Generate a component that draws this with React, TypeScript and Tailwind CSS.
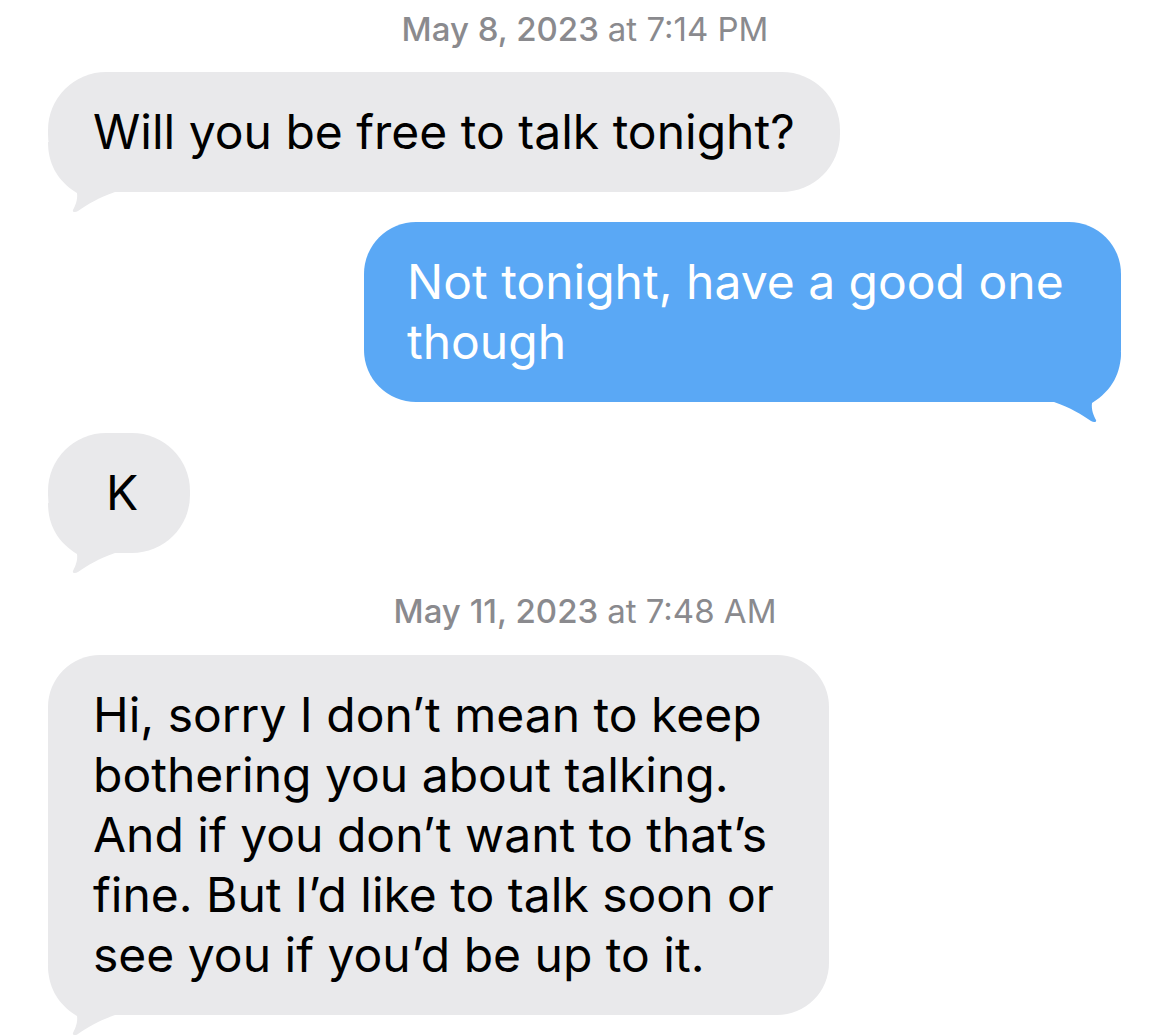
const GRAY = "#e9e9eb";
const BLUE = "#5aa8f5";

function Tail({ side, color }: { side: "left" | "right"; color: string }) {
  return (
    <svg
      width="80"
      height="75"
      viewBox="0 0 80 75"
      className={
        side === "left"
          ? "absolute left-0 bottom-[-25px]"
          : "absolute right-0 bottom-[-25px] -scale-x-100"
      }
    >
      <path
        d="M0 0 C0 20 8 38 29 51 C30 58 27 64 25 68 C24 70 27 71 30 69 C40 62 50 56 67 50 L67 0 Z"
        fill={color}
      />
    </svg>
  );
}

function Stamp({ date, time }: { date: string; time: string }) {
  return (
    <div className="flex h-[60px] items-center justify-center text-[33px] text-[#8a8a8e]">
      <span className="font-medium">{date}</span>
      <span className="ml-[9px]">at {time}</span>
    </div>
  );
}

function Bubble({
  lines,
  side,
  width,
  className,
}: {
  lines: string[];
  side: "left" | "right";
  width?: string;
  className?: string;
}) {
  const color = side === "left" ? GRAY : BLUE;
  return (
    <div className={side === "left" ? "flex justify-start pl-[48px]" : "flex justify-end pr-[49px]"}>
      <div
        className={
          "relative py-[30px] text-[48px] leading-[60px] " +
          (side === "left" ? "bg-[#e9e9eb] text-black " : "bg-[#5aa8f5] text-white ") +
          (lines.length > 1 ? "rounded-[52px] " : "rounded-[58px] ") +
          (width ?? "") +
          " " +
          (className ?? "px-[45px]")
        }
      >
        <Tail side={side} color={color} />
        <div className="relative">
          {lines.map((l) => (
            <div key={l} className="whitespace-nowrap">
              {l}
            </div>
          ))}
        </div>
      </div>
    </div>
  );
}

export default function App() {
  return (
    <div className="h-[1035px] w-[1170px] overflow-hidden bg-white font-['Inter',sans-serif]">
      <Stamp date="May 8, 2023" time="7:14 PM" />
      <div className="mt-[12px]">
        <Bubble side="left" lines={["Will you be free to talk tonight?"]} />
      </div>
      <div className="mt-[30px]">
        <Bubble
          side="right"
          width="w-[757px]"
          className="pl-[43px] pr-[40px]"
          lines={["Not tonight, have a good one", "though"]}
        />
      </div>
      <div className="mt-[31px]">
        <Bubble side="left" width="w-[142px]" className="pl-[58px] pr-[20px]" lines={["K"]} />
      </div>
      <div className="mt-[29px]">
        <Stamp date="May 11, 2023" time="7:48 AM" />
      </div>
      <div className="mt-[13px]">
        <Bubble
          side="left"
          width="w-[781px]"
          lines={[
            "Hi, sorry I don\u2019t mean to keep",
            "bothering you about talking.",
            "And if you don\u2019t want to that\u2019s",
            "fine. But I\u2019d like to talk soon or",
            "see you if you\u2019d be up to it.",
          ]}
        />
      </div>
    </div>
  );
}
